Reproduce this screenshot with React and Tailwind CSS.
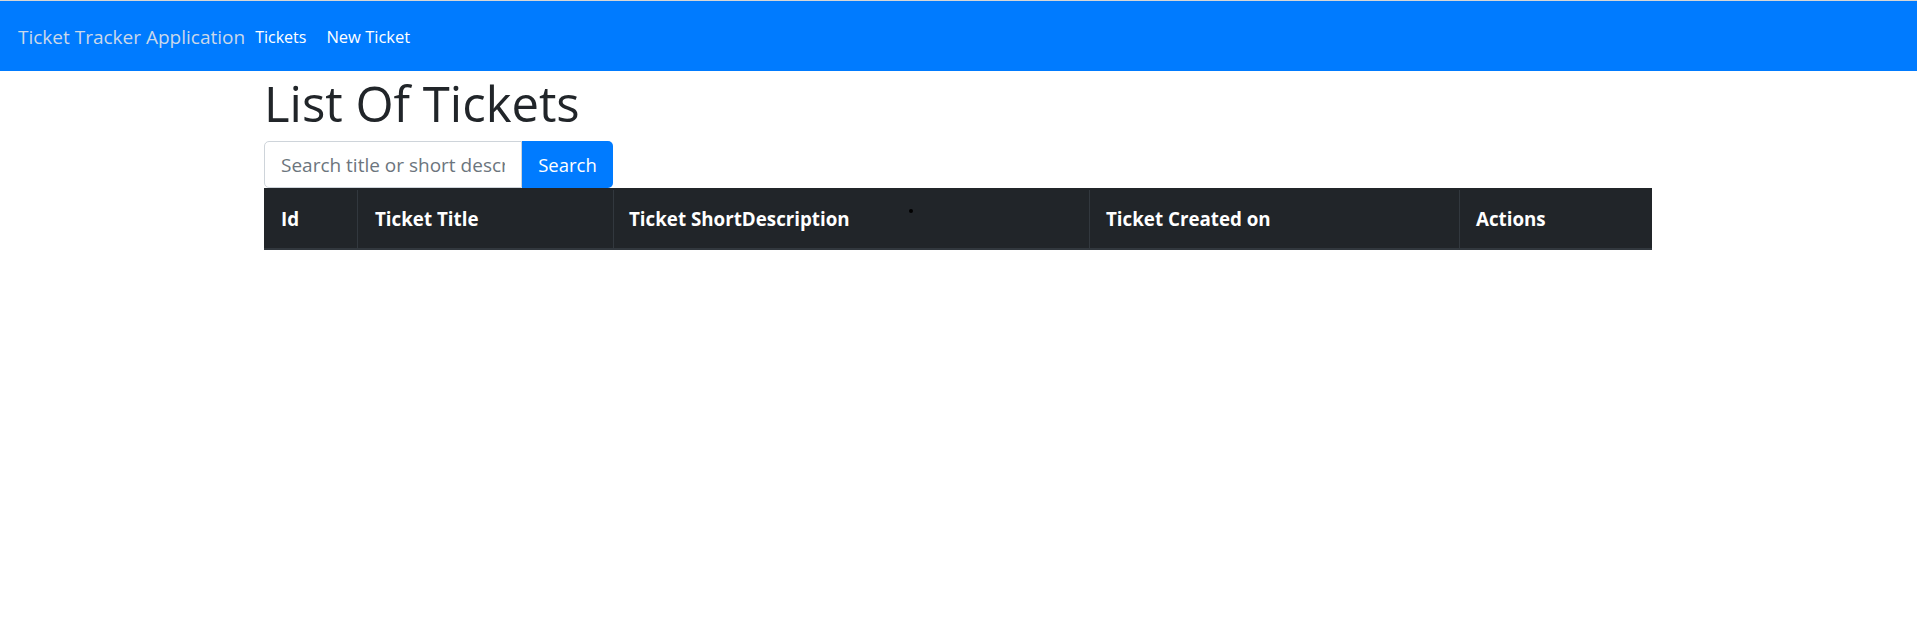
export default function App() {
  const font = { fontFamily: '"Open Sans", "Noto Sans", sans-serif' };
  return (
    <div className="min-h-[618px] bg-white" style={font}>
      <div className="h-px bg-[#d6d6d6]" />
      <nav className="flex h-[70px] items-center bg-[#007bff] pl-[18px] pt-[2px]">
        <span className="text-[19px] text-[#cad8ea]">Ticket Tracker Application</span>
        <span className="ml-[10px] text-[16px] text-white">Tickets</span>
        <span className="ml-[20px] text-[16.5px] text-white">New Ticket</span>
      </nav>
      <div className="ml-[264px] w-[1388px]">
        <h1 className="text-[49px] leading-[64px] font-normal text-[#212529]">List Of Tickets</h1>
        <div className="mt-[6px] flex">
          <input
            className="h-[47px] w-[258px] rounded-l-[5px] border border-[#ced4da] px-[16px] text-[19px] text-[#495057] outline-none placeholder:text-[#6c757d]"
            placeholder="Search title or short description"
            style={font}
          />
          <button className="h-[47px] w-[91px] rounded-r-[5px] bg-[#007bff] text-[18.5px] text-white">Search</button>
        </div>
        <div className="relative flex h-[62px] border-b-2 border-[#32383e] bg-[#212529] pt-[2px] text-[18.75px] font-bold text-white">
          <div className="flex w-[94px] items-center border-r border-[#32383e] pl-[17px]">Id</div>
          <div className="flex w-[256px] items-center border-r border-[#32383e] pl-[17px]">Ticket Title</div>
          <div className="flex w-[476px] items-center border-r border-[#32383e] pl-[15px]">Ticket ShortDescription</div>
          <div className="flex w-[370px] items-center border-r border-[#32383e] pl-[16px]">Ticket Created on</div>
          <div className="flex flex-1 items-center pl-[16px]">Actions</div>
          <span className="absolute left-[645px] top-[21px] h-[4px] w-[4px] rounded-full bg-black" />
        </div>
      </div>
    </div>
  );
}
